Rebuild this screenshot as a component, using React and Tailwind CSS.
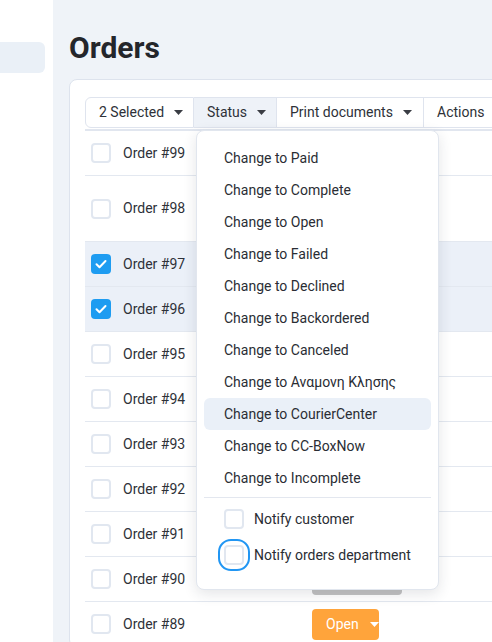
import React from "react";

const orders = [
  { id: 99, h: "h-[45px]" },
  { id: 98, h: "h-[66px]" },
  { id: 97, h: "h-[45px]", checked: true },
  { id: 96, h: "h-[45px]", checked: true },
  { id: 95, h: "h-[45px]" },
  { id: 94, h: "h-[45px]" },
  { id: 93, h: "h-[45px]" },
  { id: 92, h: "h-[45px]" },
  { id: 91, h: "h-[45px]" },
  { id: 90, h: "h-[45px]", badge: "grey" },
  { id: 89, h: "h-[45px]", badge: "open" },
];

const statusItems = [
  "Paid",
  "Complete",
  "Open",
  "Failed",
  "Declined",
  "Backordered",
  "Canceled",
  "Αναμονη Κλησης",
  "CourierCenter",
  "CC-BoxNow",
  "Incomplete",
];

function Caret({ className = "" }) {
  return (
    <svg width="9" height="5" viewBox="0 0 9 5" className={`shrink-0 ${className}`}>
      <path d="M0 0h9L4.5 5z" fill="currentColor" />
    </svg>
  );
}

function Checkbox({ checked }) {
  if (checked) {
    return (
      <div className="w-5 h-5 rounded-[4px] bg-[#1e9cf1] flex items-center justify-center shrink-0">
        <svg width="12" height="10" viewBox="0 0 12 10">
          <path d="M1.5 5.2l3 3L10.5 2" fill="none" stroke="#fff" strokeWidth="2" strokeLinecap="round" strokeLinejoin="round" />
        </svg>
      </div>
    );
  }
  return <div className="w-5 h-5 rounded-[4px] border-2 border-[#e1e7f0] bg-white shrink-0" />;
}

function App() {
  return (
    <div
      className="relative flex w-[492px] h-[642px] overflow-hidden bg-[#eff3f8] text-[#2e3138]"
      style={{ fontFamily: "Roboto, 'Liberation Sans', sans-serif" }}
    >
      {/* sidebar */}
      <div className="w-[53px] shrink-0 bg-white">
        <div className="mt-[42px] h-[31px] w-[45px] rounded-r-md bg-[#eaf0f7]" />
      </div>

      {/* main */}
      <div className="flex-1 pl-[16px] pt-[30px] min-w-0">
        <h1 className="text-[30px] leading-9 font-bold text-[#24262b]">Orders</h1>

        <div className="mt-[13px] w-[600px] rounded-lg border border-[#dde3ed] bg-white pl-[15px] pt-[17px]">
          <div className="flex h-[31px] text-[14px] whitespace-nowrap">
            <div className="flex shrink-0 items-center gap-[10px] px-[13px] border border-[#dfe4ee] rounded-l-md w-[109px]">
              2 Selected <Caret className="text-[#3a3d44]" />
            </div>
            <div className="flex shrink-0 items-center gap-[10px] px-[13px] border-y border-r border-[#dfe4ee] bg-[#eef2f8] w-[83px]">
              Status <Caret className="text-[#3a3d44]" />
            </div>
            <div className="flex shrink-0 items-center gap-[10px] px-[13px] border-y border-r border-[#dfe4ee] w-[147px]">
              Print documents <Caret className="text-[#3a3d44]" />
            </div>
            <div className="flex shrink-0 items-center px-[13px] border-y border-r border-[#dfe4ee] w-[120px]">
              Actions
            </div>
          </div>

          <div className="mt-[1px] border-t-2 border-[#e1e6ef]">
            {orders.map((o) => (
              <div
                key={o.id}
                className={`flex items-center border-b border-[#e3e8f0] pl-[6px] text-[14px] ${o.h} ${
                  o.checked ? "bg-[#ebf0f8]" : ""
                }`}
              >
                <Checkbox checked={o.checked} />
                <div className="ml-3 w-[189px]">Order #{o.id}</div>
                {o.badge === "grey" && (
                  <div className="h-[31px] w-[90px] rounded bg-[#c2c2c2]" />
                )}
                {o.badge === "open" && (
                  <div className="flex h-[31px] w-[67px] items-center rounded bg-[#ffa43b] pl-[14px] gap-[11px] text-white">
                    Open <Caret />
                  </div>
                )}
              </div>
            ))}
          </div>
        </div>
      </div>

      {/* status dropdown menu */}
      <div className="absolute left-[196px] top-[130px] w-[243px] h-[460px] rounded-lg border border-[#e1e6ee] bg-white shadow-[0_4px_14px_rgba(30,40,60,0.12)] px-[7px] pt-[11px] text-[14px] text-[#2a2d34]">
        {statusItems.map((s) => (
          <div
            key={s}
            className={`flex h-8 items-center rounded-md px-5 ${
              s === "CourierCenter" ? "bg-[#eaf0f8]" : ""
            }`}
          >
            Change to {s}
          </div>
        ))}
        <div className="mt-[3px] h-px bg-[#e3e7ef]" />
        <div className="mt-[11px] flex h-5 items-center pl-5">
          <Checkbox />
          <span className="ml-[10px]">Notify customer</span>
        </div>
        <div className="mt-4 flex h-5 items-center pl-5">
          <div className="rounded-[7px] outline-2 outline-offset-4 outline-[#2196f3]">
            <Checkbox />
          </div>
          <span className="ml-[10px]">Notify orders department</span>
        </div>
      </div>
    </div>
  );
}

export default App;
